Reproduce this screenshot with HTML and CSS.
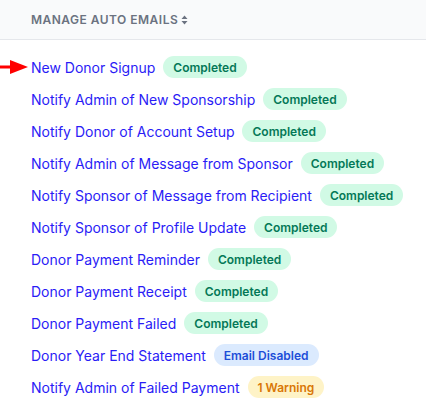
FILE: index.html
```html
<!DOCTYPE html>
<html>
<head>
<meta charset="utf-8">
<link rel="stylesheet" href="styles.css">
</head>
<body>
<div class="panel">
  <div class="header">
    <span class="title">Manage Auto Emails</span>
    <svg class="sort" width="7" height="10" viewBox="0 0 7 10"><path d="M3.5 0.5 L6.5 4 H0.5 Z M3.5 9.5 L6.5 6 H0.5 Z" fill="#6b7280"/></svg>
  </div>
  <ul class="list">
    <li class="row">
      <svg class="arrow" width="29" height="16" viewBox="0 0 29 16"><rect x="0" y="6.5" width="12" height="3" fill="#ff0000"/><path d="M10 1 L28 8 L10 15 Z" fill="#ff0000"/></svg>
      <a href="#" class="link">New Donor Signup</a><span class="badge ok">Completed</span>
    </li>
    <li class="row"><a href="#" class="link">Notify Admin of New Sponsorship</a><span class="badge ok">Completed</span></li>
    <li class="row"><a href="#" class="link">Notify Donor of Account Setup</a><span class="badge ok">Completed</span></li>
    <li class="row"><a href="#" class="link">Notify Admin of Message from Sponsor</a><span class="badge ok">Completed</span></li>
    <li class="row"><a href="#" class="link">Notify Sponsor of Message from Recipient</a><span class="badge ok">Completed</span></li>
    <li class="row"><a href="#" class="link">Notify Sponsor of Profile Update</a><span class="badge ok">Completed</span></li>
    <li class="row"><a href="#" class="link">Donor Payment Reminder</a><span class="badge ok">Completed</span></li>
    <li class="row"><a href="#" class="link">Donor Payment Receipt</a><span class="badge ok">Completed</span></li>
    <li class="row"><a href="#" class="link">Donor Payment Failed</a><span class="badge ok">Completed</span></li>
    <li class="row"><a href="#" class="link">Donor Year End Statement</a><span class="badge off">Email Disabled</span></li>
    <li class="row"><a href="#" class="link">Notify Admin of Failed Payment</a><span class="badge warn">1 Warning</span></li>
  </ul>
</div>
</body>
</html>
```
FILE: styles.css
```css
* { box-sizing: border-box; }
html, body { margin: 0; padding: 0; background: #ffffff; }
body { font-family: Inter, "Noto Sans", sans-serif; }
.panel { width: 426px; }
.header {
  height: 40px;
  background: #f9fafb;
  border-bottom: 1px solid #e5e7eb;
  display: flex;
  align-items: center;
  padding-left: 31px;
  gap: 3px;
}
.title {
  text-transform: uppercase;
  font-size: 12px;
  font-weight: 600;
  letter-spacing: 0.04em;
  color: #6b7280;
}
.sort { display: block; }
.list { list-style: none; margin: 0; padding: 11px 0 0 31px; }
.row {
  position: relative;
  height: 32px;
  display: flex;
  align-items: center;
}
.arrow { position: absolute; left: -31px; top: 8px; }
.link {
  color: #2a1cf6;
  text-decoration: none;
  font-size: 14px;
}
.badge {
  margin-left: 8px;
  height: 22px;
  display: inline-flex;
  align-items: center;
  padding: 0 10px;
  border-radius: 11px;
  font-size: 12px;
  font-weight: 600;
}
.ok { background: #d1fae5; color: #047857; }
.off { background: #dbeafe; color: #1d4ed8; }
.warn { background: #fef3c7; color: #d97706; }
```
